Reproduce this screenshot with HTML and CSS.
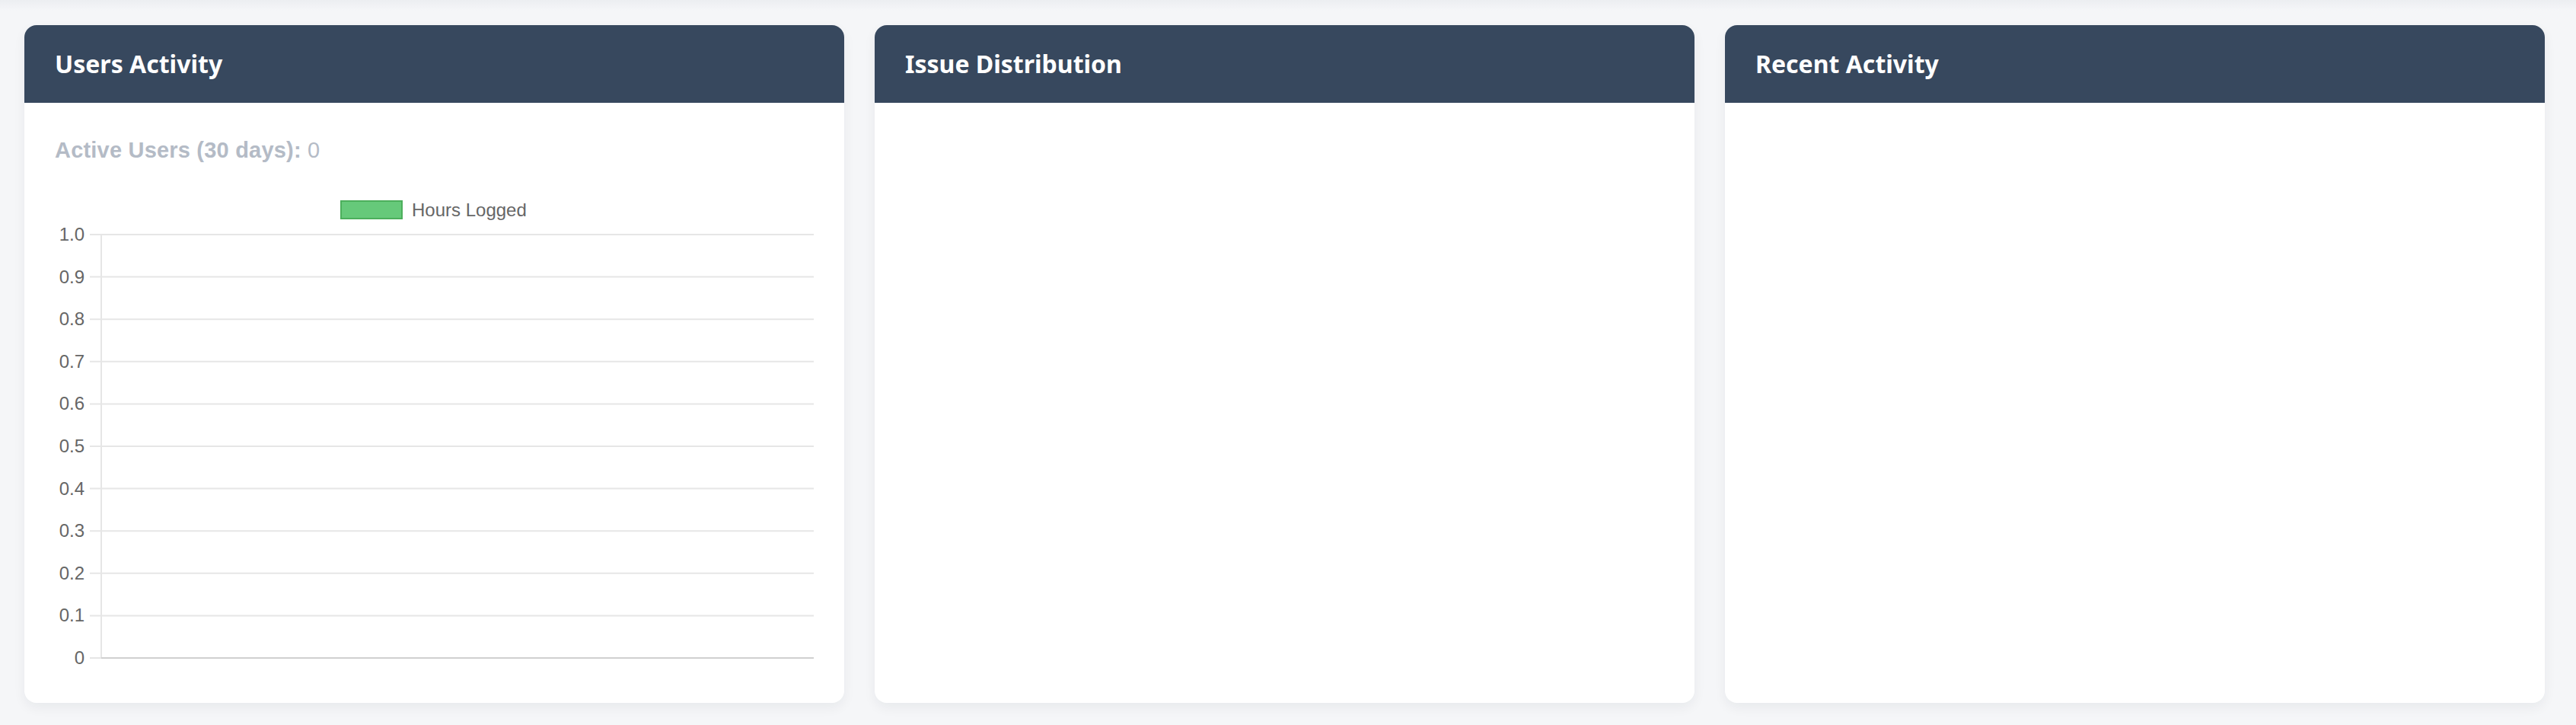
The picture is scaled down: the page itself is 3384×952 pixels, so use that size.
FILE: index.html
```html
<!DOCTYPE html>
<html lang="en">
<head>
<meta charset="utf-8">
<title>Dashboard</title>
<link rel="stylesheet" href="styles.css">
</head>
<body>
<div class="top-shade"></div>
<main class="grid">
  <section class="card">
    <header class="card-header"><h2>Users Activity</h2></header>
    <div class="card-body">
      <p class="active-users"><strong>Active Users (30 days):</strong> 0</p>
      <svg class="chart" width="997" height="640" viewBox="0 0 997 640" xmlns="http://www.w3.org/2000/svg">
        <rect x="376" y="21" width="80" height="23" fill="#66c97a" stroke="#4caf5c" stroke-width="2"/>
        <text x="469" y="41" class="lg">Hours Logged</text>
        <g stroke="#e6e6e6" stroke-width="2">
          <line x1="46" y1="65" x2="997" y2="65"/>
          <line x1="46" y1="120.6" x2="997" y2="120.6"/>
          <line x1="46" y1="176.2" x2="997" y2="176.2"/>
          <line x1="46" y1="231.8" x2="997" y2="231.8"/>
          <line x1="46" y1="287.4" x2="997" y2="287.4"/>
          <line x1="46" y1="343" x2="997" y2="343"/>
          <line x1="46" y1="398.6" x2="997" y2="398.6"/>
          <line x1="46" y1="454.2" x2="997" y2="454.2"/>
          <line x1="46" y1="509.8" x2="997" y2="509.8"/>
          <line x1="46" y1="565.4" x2="997" y2="565.4"/>
          <line x1="46" y1="621" x2="61" y2="621"/>
          <line x1="61" y1="66" x2="61" y2="621"/>
        </g>
        <line x1="61" y1="621" x2="997" y2="621" stroke="#d0d0d0" stroke-width="2"/>
        <g class="ticks" text-anchor="end">
          <text x="39" y="73">1.0</text>
          <text x="39" y="128.6">0.9</text>
          <text x="39" y="184.2">0.8</text>
          <text x="39" y="239.8">0.7</text>
          <text x="39" y="295.4">0.6</text>
          <text x="39" y="351">0.5</text>
          <text x="39" y="406.6">0.4</text>
          <text x="39" y="462.2">0.3</text>
          <text x="39" y="517.8">0.2</text>
          <text x="39" y="573.4">0.1</text>
          <text x="39" y="629">0</text>
        </g>
      </svg>
    </div>
  </section>
  <section class="card">
    <header class="card-header"><h2>Issue Distribution</h2></header>
    <div class="card-body"></div>
  </section>
  <section class="card">
    <header class="card-header"><h2>Recent Activity</h2></header>
    <div class="card-body"></div>
  </section>
</main>
</body>
</html>
```
FILE: styles.css
```css
html, body {
  margin: 0;
  padding: 0;
}
body {
  background: #f5f6f8;
  font-family: "Liberation Sans", Arial, sans-serif;
  width: 3384px;
  height: 952px;
  overflow: hidden;
  position: relative;
}
.top-shade {
  position: absolute;
  left: 0;
  right: 0;
  top: 0;
  height: 14px;
  background: linear-gradient(#eceef1, rgba(245, 246, 248, 0));
}
.grid {
  display: grid;
  grid-template-columns: repeat(3, 1077px);
  column-gap: 40px;
  padding: 33px 0 0 32px;
}
.card {
  background: #ffffff;
  border-radius: 16px;
  height: 890px;
  overflow: hidden;
  box-shadow: 0 6px 16px rgba(20, 30, 50, 0.06);
  display: flex;
  flex-direction: column;
}
.card-header {
  background: #37485e;
  height: 102px;
  display: flex;
  align-items: center;
  padding: 0 40px;
  flex-shrink: 0;
}
.card-header h2 {
  margin: 0;
  color: #ffffff;
  font-family: "Noto Sans", "Open Sans", sans-serif;
  font-weight: 700;
  font-size: 32px;
  line-height: 1.3;
}
.card-body {
  padding: 41px 40px 0 40px;
  flex: 1;
}
.active-users {
  margin: 0;
  font-size: 29px;
  line-height: 42px;
  letter-spacing: 0.2px;
  color: #b4bbc6;
}
.active-users strong {
  font-weight: 700;
}
.chart {
  display: block;
  margin-top: 25px;
}
.chart .lg {
  font-family: "Liberation Sans", Arial, sans-serif;
  font-size: 24px;
  fill: #666666;
}
.chart .ticks text {
  font-family: "Liberation Sans", Arial, sans-serif;
  font-size: 24px;
  fill: #666666;
}
```
